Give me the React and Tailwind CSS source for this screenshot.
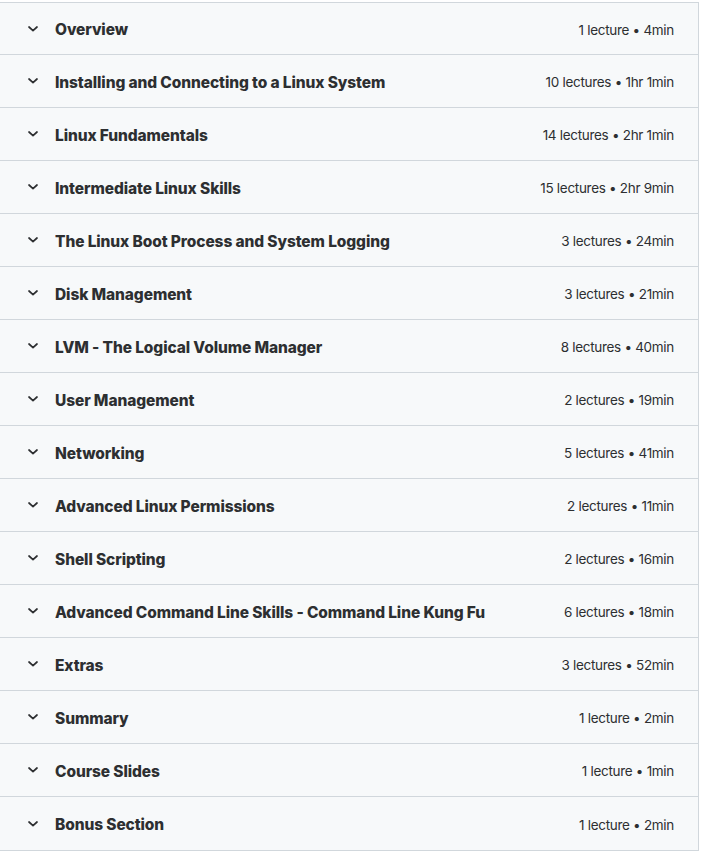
import React from 'react';

const sections = [
  { title: 'Overview', meta: '1 lecture • 4min' },
  { title: 'Installing and Connecting to a Linux System', meta: '10 lectures • 1hr 1min' },
  { title: 'Linux Fundamentals', meta: '14 lectures • 2hr 1min' },
  { title: 'Intermediate Linux Skills', meta: '15 lectures • 2hr 9min' },
  { title: 'The Linux Boot Process and System Logging', meta: '3 lectures • 24min' },
  { title: 'Disk Management', meta: '3 lectures • 21min' },
  { title: 'LVM - The Logical Volume Manager', meta: '8 lectures • 40min' },
  { title: 'User Management', meta: '2 lectures • 19min' },
  { title: 'Networking', meta: '5 lectures • 41min' },
  { title: 'Advanced Linux Permissions', meta: '2 lectures • 11min' },
  { title: 'Shell Scripting', meta: '2 lectures • 16min' },
  { title: 'Advanced Command Line Skills - Command Line Kung Fu', meta: '6 lectures • 18min' },
  { title: 'Extras', meta: '3 lectures • 52min' },
  { title: 'Summary', meta: '1 lecture • 2min' },
  { title: 'Course Slides', meta: '1 lecture • 1min' },
  { title: 'Bonus Section', meta: '1 lecture • 2min' },
];

const Chevron = () => (
  <svg width="12" height="12" viewBox="0 0 12 12" fill="none" className="shrink-0">
    <path d="M2 4l4 3.6L10 4" stroke="#2d2f31" strokeWidth="1.7" strokeLinecap="round" strokeLinejoin="round" />
  </svg>
);

export default function App() {
  return (
    <div className="min-h-screen bg-white pt-[2px]" style={{ fontFamily: 'Inter, "Noto Sans", sans-serif' }}>
      <div className="w-[699px] border-y border-r border-[#d1d7dc] bg-[#f7f9fa] divide-y divide-[#d1d7dc]">
        {sections.map((s) => (
          <div key={s.title} className="flex h-[53px] items-center pl-[27px] pr-[24px] first:h-[52px]">
            <Chevron />
            <span className="ml-[16px] flex-1 truncate pt-[3px] text-[15.5px] font-extrabold tracking-[-0.1px] text-[#2d2f31]">{s.title}</span>
            <span className="ml-4 pt-[3px] text-[13.5px] tracking-[-0.3px] text-[#2d2f31]">{s.meta}</span>
          </div>
        ))}
      </div>
    </div>
  );
}
